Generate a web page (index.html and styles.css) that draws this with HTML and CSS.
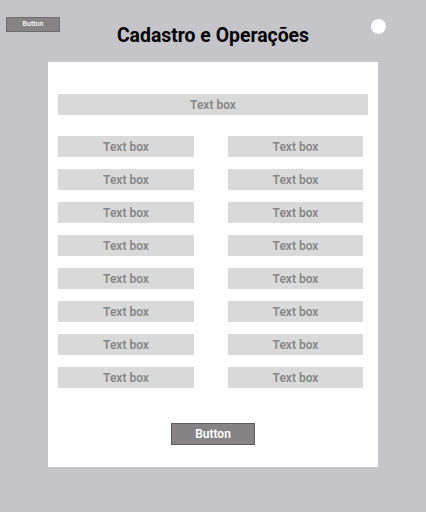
FILE: index.html
```html
<!DOCTYPE html>
<html>
<head>
    <title>Cadastro e Operações</title>
    <link rel="stylesheet" href="styles.css">
</head>
<body>
    <div class="header">
        <button class="small-button">Button</button>
        <h1>Cadastro e Operações</h1>
        <div class="dot"></div>
    </div>

    <div class="card">
        <div class="text-box wide">Text box</div>

        <div class="fields">
            <div class="text-box">Text box</div>
            <div class="text-box">Text box</div>
            <div class="text-box">Text box</div>
            <div class="text-box">Text box</div>
            <div class="text-box">Text box</div>
            <div class="text-box">Text box</div>
            <div class="text-box">Text box</div>
            <div class="text-box">Text box</div>
            <div class="text-box">Text box</div>
            <div class="text-box">Text box</div>
            <div class="text-box">Text box</div>
            <div class="text-box">Text box</div>
            <div class="text-box">Text box</div>
            <div class="text-box">Text box</div>
            <div class="text-box">Text box</div>
            <div class="text-box">Text box</div>
        </div>

        <div class="actions">
            <button class="main-button">Button</button>
        </div>
    </div>
</body>
</html>
```

FILE: styles.css
```css
body {
    font-family: Roboto, "Liberation Sans", sans-serif;
    background: #c5c4c9;
    margin: 0;
    width: 426px;
    height: 512px;
}
.header {
    display: grid;
    grid-template-columns: 1fr auto 1fr;
    align-items: start;
    height: 62px;
}
.small-button {
    justify-self: start;
    margin: 17px 0 0 6px;
    width: 54px;
    height: 15px;
    padding: 0;
    background: #858383;
    border: 1px solid #6e6e6e;
    color: #fff;
    font-family: Roboto, sans-serif;
    font-size: 7px;
    font-weight: 500;
    line-height: 13px;
}
h1 {
    margin: 24px 0 0 0;
    font-size: 19.4px;
    line-height: 24px;
    font-weight: bold;
    color: #000;
}
.dot {
    justify-self: end;
    margin: 19px 40px 0 0;
    width: 15px;
    height: 15px;
    border-radius: 50%;
    background: #fff;
}
.card {
    width: 330px;
    margin: 0 auto;
    background: #fff;
    padding: 32px 0 22px 10px;
    box-sizing: border-box;
}
.text-box {
    background: #d9d9d9;
    color: #878787;
    font-size: 12px;
    font-weight: 600;
    height: 21px;
    line-height: 23px;
    text-align: center;
}
.text-box.wide {
    width: 310px;
    margin-bottom: 21px;
}
.fields {
    display: grid;
    grid-template-columns: 136px 135px;
    column-gap: 34px;
    row-gap: 12px;
}
.actions {
    padding: 35px 0 0 113px;
}
.main-button {
    width: 84px;
    height: 22px;
    padding: 0;
    background: #858383;
    border: 1px solid #5e5e5e;
    color: #fff;
    font-family: Roboto, sans-serif;
    font-size: 12px;
    font-weight: 600;
    display: block;
}
```
